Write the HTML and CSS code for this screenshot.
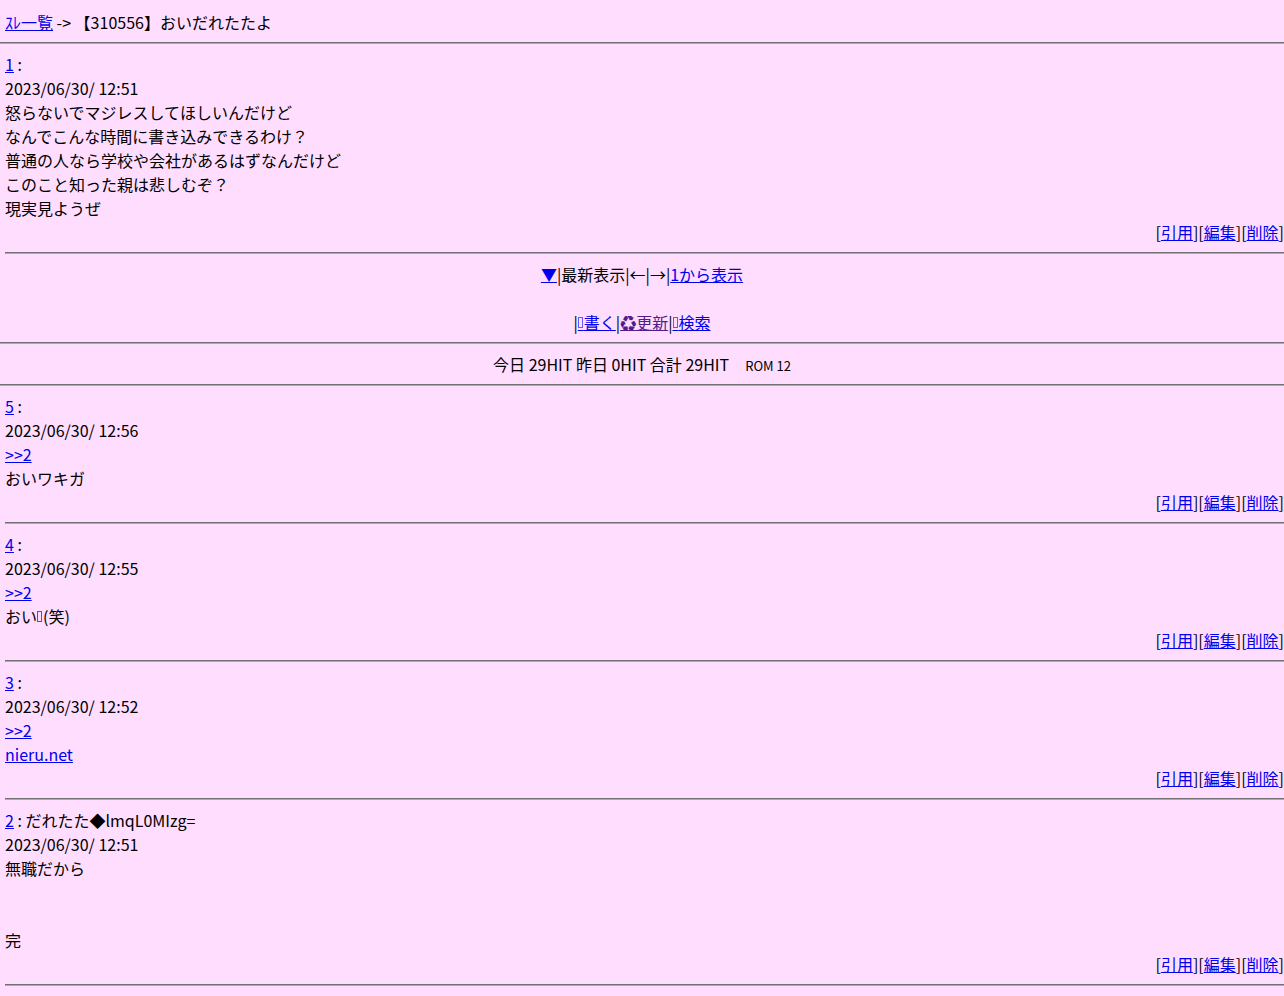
FILE: index.html
```html
<!DOCTYPE html>
<html lang="ja">
<head>
    <meta charset="UTF-8">
    <meta name="viewport" content="width=device-width, initial-scale=1.0">
    <title>おいだれたたよ</title>
    <link rel="stylesheet" href="styles.css">
</head>
<body>
    <div class="title"><a href="#">ｽﾚ一覧</a> -&gt; 【310556】おいだれたたよ</div>
    <hr>

    <div class="post">
        <a href="#">1</a> :<br>
        2023/06/30/ 12:51<br>
        怒らないでマジレスしてほしいんだけど<br>
        なんでこんな時間に書き込みできるわけ？<br>
        普通の人なら学校や会社があるはずなんだけど<br>
        このこと知った親は悲しむぞ？<br>
        現実見ようぜ
        <div class="actions">[<a href="#">引用</a>][<a href="#">編集</a>][<a href="#">削除</a>]</div>
        <hr>
    </div>

    <div class="nav">
        <a href="#">▼</a>|最新表示|←|→|<a href="#">1から表示</a><br>
        <br>
        |<a href="#"><span class="emoji">&nbsp;</span>書く</a>|<a class="visited" href="#">♻更新</a>|<a href="#"><span class="emoji">&nbsp;</span>検索</a>
    </div>
    <hr>
    <div class="counter">今日 29HIT 昨日 0HIT 合計 29HIT　<span class="rom">ROM 12</span></div>
    <hr>

    <div class="post">
        <a href="#">5</a> :<br>
        2023/06/30/ 12:56<br>
        <a href="#">&gt;&gt;2</a><br>
        おいワキガ
        <div class="actions">[<a href="#">引用</a>][<a href="#">編集</a>][<a href="#">削除</a>]</div>
        <hr>
    </div>

    <div class="post">
        <a href="#">4</a> :<br>
        2023/06/30/ 12:55<br>
        <a href="#">&gt;&gt;2</a><br>
        おい<span class="emoji">&nbsp;</span>(笑)
        <div class="actions">[<a href="#">引用</a>][<a href="#">編集</a>][<a href="#">削除</a>]</div>
        <hr>
    </div>

    <div class="post">
        <a href="#">3</a> :<br>
        2023/06/30/ 12:52<br>
        <a href="#">&gt;&gt;2</a><br>
        <a href="#">nieru.net</a>
        <div class="actions">[<a href="#">引用</a>][<a href="#">編集</a>][<a href="#">削除</a>]</div>
        <hr>
    </div>

    <div class="post">
        <a href="#">2</a> : だれたた◆lmqL0MIzg=<br>
        2023/06/30/ 12:51<br>
        無職だから<br>
        <br>
        <br>
        完
        <div class="actions">[<a href="#">引用</a>][<a href="#">編集</a>][<a href="#">削除</a>]</div>
        <hr>
    </div>
</body>
</html>
```
FILE: styles.css
```css
body {
    margin: 0;
    padding-top: 10px;
    background-color: #ffddff;
    color: #000;
    font-family: "Noto Sans CJK JP", sans-serif;
    font-size: 16px;
    line-height: 24px;
}

a {
    color: #0000ee;
}

a.visited {
    color: #551a8b;
}

hr {
    margin: 8px 0;
    border: 0;
    border-top: 1px solid #727072;
    border-bottom: 1px solid #b4a5b4;
}

.title,
.post {
    padding-left: 5px;
}

.actions {
    text-align: right;
}

.nav,
.counter {
    text-align: center;
}

.rom {
    font-size: 13px;
    line-height: 1;
}

/* empty box for old carrier emoji */
.emoji {
    position: relative;
    letter-spacing: 2.4px;
}

.emoji::after {
    content: "";
    position: absolute;
    left: 0;
    top: 7px;
    width: 3px;
    height: 9px;
    border: 1px solid currentColor;
    opacity: 0.6;
}
```
